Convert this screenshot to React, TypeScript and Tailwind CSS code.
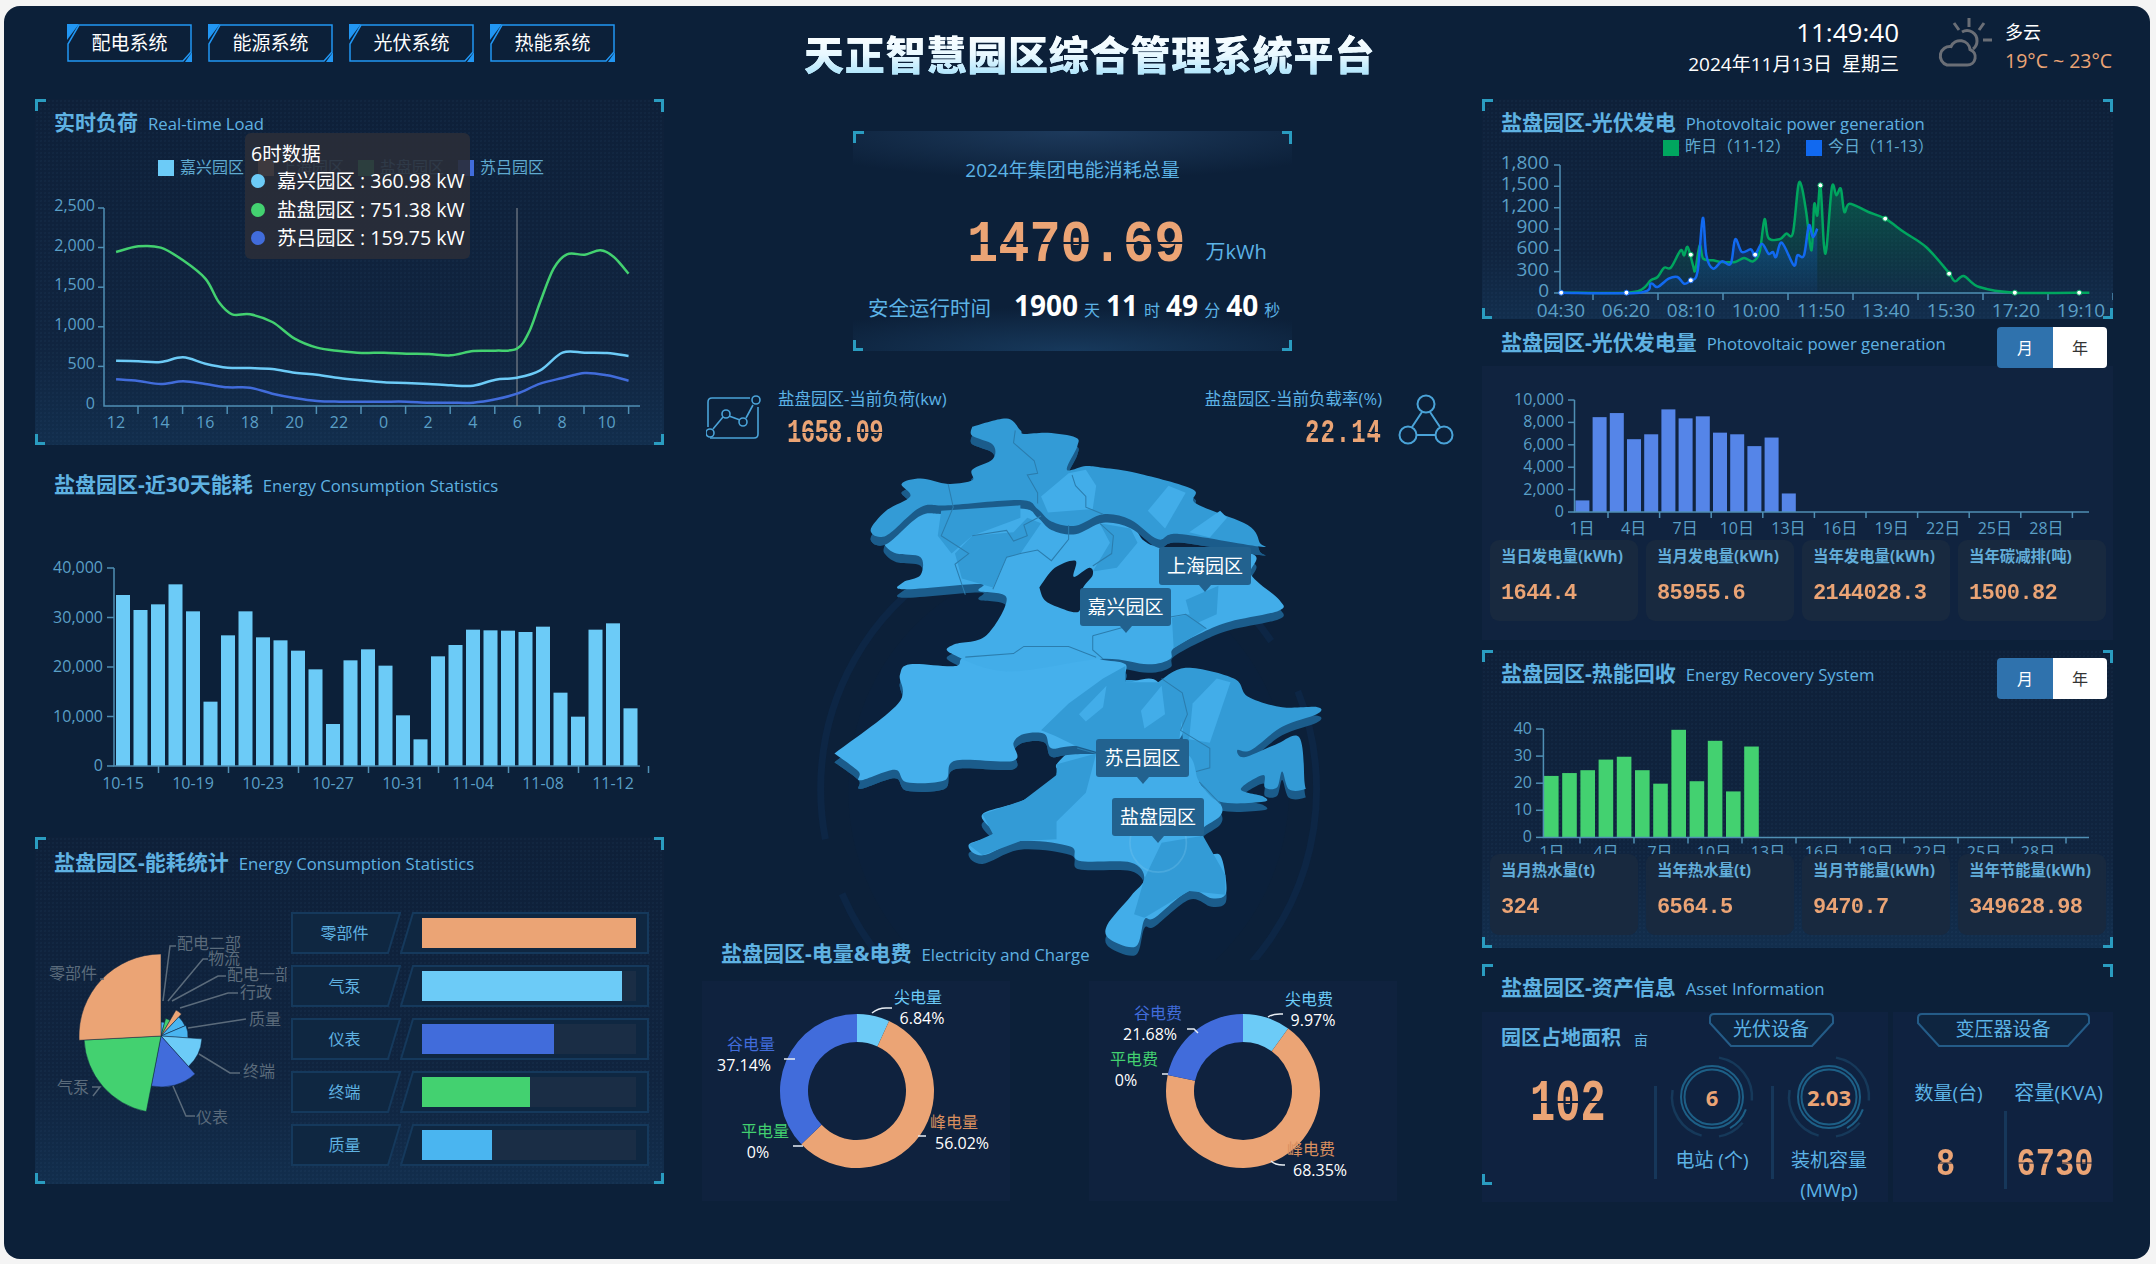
import type { ReactNode } from "react";

type Pt = [number, number];

const ORANGE = "#eba475";
const SKY = "#6ccbf7";
const GREEN = "#43d170";
const BLUE = "#416cdb";
const AZURE = "#4ab5f0";

// catmull-rom, enough to get the echarts "smooth" look
const smooth = (pts: Pt[]) => {
  let d = `M${pts[0][0]} ${pts[0][1]}`;
  for (let i = 0; i < pts.length - 1; i++) {
    const p0 = pts[i - 1] || pts[i];
    const p1 = pts[i];
    const p2 = pts[i + 1];
    const p3 = pts[i + 2] || p2;
    const c1x = p1[0] + (p2[0] - p0[0]) / 6;
    const c1y = p1[1] + (p2[1] - p0[1]) / 6;
    const c2x = p2[0] - (p3[0] - p1[0]) / 6;
    const c2y = p2[1] - (p3[1] - p1[1]) / 6;
    d += `C${c1x} ${c1y} ${c2x} ${c2y} ${p2[0]} ${p2[1]}`;
  }
  return d;
};

const polar = (cx: number, cy: number, r: number, a: number): Pt => {
  const t = (a * Math.PI) / 180;
  return [cx + r * Math.sin(t), cy - r * Math.cos(t)];
};

const slice = (cx: number, cy: number, r0: number, r1: number, a0: number, a1: number) => {
  const large = a1 - a0 > 180 ? 1 : 0;
  const [x0, y0] = polar(cx, cy, r1, a0);
  const [x1, y1] = polar(cx, cy, r1, a1);
  const [x2, y2] = polar(cx, cy, r0, a1);
  const [x3, y3] = polar(cx, cy, r0, a0);
  return `M${x0} ${y0}A${r1} ${r1} 0 ${large} 1 ${x1} ${y1}L${x2} ${y2}A${r0} ${r0} 0 ${large} 0 ${x3} ${y3}Z`;
};

const arc = (cx: number, cy: number, r: number, a0: number, a1: number) => {
  const [x0, y0] = polar(cx, cy, r, a0);
  const [x1, y1] = polar(cx, cy, r, a1);
  return `M${x0} ${y0}A${r} ${r} 0 ${a1 - a0 > 180 ? 1 : 0} 1 ${x1} ${y1}`;
};

const Digi = ({ children, className = "" }: { children: ReactNode; className?: string }) => (
  <span
    className={`inline-block leading-none whitespace-nowrap font-bold [font-family:'Liberation_Mono',monospace] text-transparent bg-clip-text bg-[linear-gradient(180deg,#eba475_44%,transparent_44%,transparent_47%,#eba475_47%)] ${className}`}
  >
    {children}
  </span>
);

const Corners = ({ bottom = true }: { bottom?: boolean }) => (
  <>
    <i className="absolute left-0 top-0 w-[11px] h-[12px] border-l-[3px] border-t-[3px] border-[#2a9cc0]" />
    <i className="absolute right-0 top-0 w-[10px] h-[13px] border-r-[3px] border-t-[3px] border-[#2a9cc0]" />
    {bottom && (
      <>
        <i className="absolute left-0 bottom-0 w-[10px] h-[11px] border-l-[3px] border-b-[3px] border-[#2a9cc0]" />
        <i className="absolute right-0 bottom-0 w-[10px] h-[11px] border-r-[3px] border-b-[3px] border-[#2a9cc0]" />
      </>
    )}
  </>
);

const dotted =
  "bg-[radial-gradient(rgba(120,170,220,0.04)_1px,transparent_1px),linear-gradient(180deg,#0e2039_0%,#10243f_70%,#122e4d_100%)] bg-[size:4px_4px,100%_100%]";

const Title = ({ zh, en }: { zh: string; en: string }) => (
  <div className="-mt-px flex items-baseline gap-[10px] whitespace-nowrap leading-6">
    <span className="text-[21px] font-bold text-[#5fb2e2]">{zh}</span>
    <span className="text-[16.7px] text-[#5fb2e2]">{en}</span>
  </div>
);

const Toggle = () => (
  <div className="flex w-[110px] h-[41px] rounded overflow-hidden text-[16px]">
    <div className="w-[56px] bg-[#2f72ad] text-white flex items-center justify-center">月</div>
    <div className="flex-1 bg-white text-[#333] flex items-center justify-center">年</div>
  </div>
);

const navItems = ["配电系统", "能源系统", "光伏系统", "热能系统"];

const NavButton = ({ label }: { label: string }) => (
  <div className="relative w-[125px] h-[38px] flex items-center justify-center text-[19px] text-white">
    <svg className="absolute inset-0" width="125" height="38">
      <path d="M12 1H124V28L116 37H1V20Z" fill="none" stroke="#2196f3" strokeWidth="1.5" />
      <path d="M0 0H12L0 16Z" fill="#2196f3" />
      <path d="M125 38H118L125 28Z" fill="#2196f3" />
    </svg>
    <span className="relative">{label}</span>
  </div>
);

// ---- left column ----

const z1 = (a: number[][]): Pt[] => a.map(([x, y]) => [x / 2.24, y / 3]);

const loadLight = z1([[260,1076],[310,1078],[360,1080],[410,1066],[460,1085],[510,1097],[560,1098],[610,1101],[660,1112],[710,1118],[760,1128],[810,1135],[860,1141],[910,1143],[960,1146],[1010,1150],[1060,1151],[1110,1133],[1158,1127],[1210,1105],[1260,1052],[1310,1052],[1360,1053],[1408,1062]]);
const loadGreen = z1([[260,750],[310,733],[360,737],[410,775],[460,830],[490,900],[520,937],[560,937],[610,960],[660,1010],[710,1037],[760,1047],[810,1053],[860,1052],[910,1055],[960,1056],[1010,1060],[1060,1047],[1110,1046],[1158,1040],[1185,990],[1210,900],[1240,800],[1270,757],[1310,758],[1345,745],[1375,765],[1408,815]]);
const loadBlue = z1([[260,1132],[310,1137],[360,1146],[410,1138],[460,1146],[510,1156],[560,1157],[610,1175],[660,1188],[710,1197],[760,1199],[810,1199],[860,1199],[910,1199],[960,1202],[1010,1202],[1060,1202],[1110,1192],[1158,1175],[1210,1145],[1260,1128],[1310,1113],[1360,1120],[1408,1136]]);

const axisLabel = "fill-[#5a9fc6] text-[16px]";

const LoadChart = () => (
  <svg width="629" height="310" viewBox="35 134 629 310" className="block">
    {[["嘉兴园区", SKY], ["上海园区", ORANGE], ["盐盘园区", GREEN], ["苏吕园区", BLUE]].map(([name, c], i) => (
      <g key={name}>
        <rect x={158 + i * 100} y="158" width="16" height="16" fill={c} />
        <text x={180 + i * 100} y="171" className="fill-[#5fa9cf] text-[16px]">{name}</text>
      </g>
    ))}
    <path d="M104 206V404H640" fill="none" stroke="#4f8fb4" strokeWidth="1.5" />
    {[206, 245.6, 285.2, 324.8, 364.4].map((y) => (
      <path key={y} d={`M98 ${y}H104`} stroke="#4f8fb4" strokeWidth="1.5" />
    ))}
    {["2,500", "2,000", "1,500", "1,000", "500", "0"].map((t, i) => (
      <text key={t} x="95" y={209 + i * 39.6} textAnchor="end" className={axisLabel}>{t}</text>
    ))}
    {Array.from({ length: 12 }, (_, i) => (
      <path key={i} d={`M${138 + i * 44.6} 404v8`} stroke="#4f8fb4" strokeWidth="1.5" />
    ))}
    {["12", "14", "16", "18", "20", "22", "0", "2", "4", "6", "8", "10"].map((t, i) => (
      <text key={t} x={116 + i * 44.6} y="426" textAnchor="middle" className={axisLabel}>{t}</text>
    ))}
    <path d="M517 206V404" stroke="#8b8f96" strokeWidth="1" />
    <path d={smooth(loadLight)} fill="none" stroke={SKY} strokeWidth="2.5" />
    <path d={smooth(loadGreen)} fill="none" stroke={GREEN} strokeWidth="2.5" />
    <path d={smooth(loadBlue)} fill="none" stroke={BLUE} strokeWidth="2.5" />
  </svg>
);

const tooltipRows = [
  [SKY, "嘉兴园区 : 360.98 kW"],
  [GREEN, "盐盘园区 : 751.38 kW"],
  [BLUE, "苏吕园区 : 159.75 kW"],
];

const LoadTooltip = () => (
  <div className="absolute left-[210px] top-[34px] w-[225px] h-[126px] rounded-md bg-[#2a2e38]/90 pl-[6px] pt-[8px] text-[19.5px] leading-[28.5px] text-white">
    <div className="leading-[26px]">6时数据</div>
    {tooltipRows.map(([c, t]) => (
      <div key={t} className="flex items-center whitespace-nowrap">
        <i className="w-[14px] h-[14px] rounded-full mr-[12px]" style={{ background: c }} />
        {t}
      </div>
    ))}
  </div>
);

const monthBars = [402,447,430,370,451,722,523,451,529,538,569,625,789,598,565,614,763,835,586,552,506,508,509,513,497,695,767,506,487,742];

const MonthChart = () => (
  <svg width="629" height="303" viewBox="35 497 629 303" className="block">
    {monthBars.map((t, i) => (
      <rect key={i} x={116 + i * 17.5} y={460 + t / 3} width="14" height={765 - 460 - t / 3} fill={SKY} />
    ))}
    <path d="M114 567V765H640" fill="none" stroke="#4f8fb4" strokeWidth="1.5" />
    {["40,000", "30,000", "20,000", "10,000", "0"].map((t, i) => (
      <g key={t}>
        <path d={`M107 ${567 + i * 49.5}h7`} stroke="#4f8fb4" strokeWidth="1.5" />
        <text x="103" y={572 + i * 49.5} textAnchor="end" className={axisLabel}>{t}</text>
      </g>
    ))}
    {["10-15", "10-19", "10-23", "10-27", "10-31", "11-04", "11-08", "11-12"].map((t, i) => (
      <g key={t}>
        <path d={`M${158.5 + i * 70} 765v7`} stroke="#4f8fb4" strokeWidth="1.5" />
        <text x={123 + i * 70} y="788" textAnchor="middle" className={axisLabel}>{t}</text>
      </g>
    ))}
  </svg>
);

const pieLabel = "fill-[#5b6b7b] text-[16px]";
const pieSlices: [number, number, number, string][] = [
  [0, 15, 14, "#4ab5f0"],
  [15, 30, 18, GREEN],
  [30, 43, 30, ORANGE],
  [43, 67, 26, "#4ab5f0"],
  [67, 94, 27, AZURE],
  [94, 138, 41, SKY],
  [138, 191, 51, BLUE],
  [191, 267, 77, GREEN],
  [267, 360, 82, ORANGE],
];

const PieChart = () => (
  <svg width="252" height="230" viewBox="35 905 252 230" className="block shrink-0">
    {pieSlices.map(([a0, a1, r, c], i) => (
      <path key={i} d={slice(161, 1035, 0, r, a0, a1)} fill={c} stroke="#0f2540" strokeWidth="0.5" />
    ))}
    <g fill="none" stroke="#5b6b7b" strokeWidth="1.5">
      <path d="M163 1000L170 945H176" />
      <path d="M168 1000L203 958H208" />
      <path d="M172 1000L218 975H226" />
      <path d="M180 1007L228 992H238" />
      <path d="M188 1027L246 1018" />
      <path d="M199 1053L230 1072H240" />
      <path d="M173 1085L186 1115H195" />
      <path d="M93 1095L100 1086H92" />
      <path d="M100 978H104" />
    </g>
    <text x="177" y="948" className={pieLabel}>配电二部</text>
    <text x="208" y="963" className={pieLabel}>物流</text>
    <text x="227" y="979" className={pieLabel}>配电一部</text>
    <text x="240" y="997" className={pieLabel}>行政</text>
    <text x="249" y="1024" className={pieLabel}>质量</text>
    <text x="243" y="1076" className={pieLabel}>终端</text>
    <text x="196" y="1122" className={pieLabel}>仪表</text>
    <text x="57" y="1092" className={pieLabel}>气泵</text>
    <text x="49" y="978" className={pieLabel}>零部件</text>
  </svg>
);

const statRows: [string, number, string][] = [
  ["零部件", 100, ORANGE],
  ["气泵", 93.3, SKY],
  ["仪表", 61.7, BLUE],
  ["终端", 50.4, GREEN],
  ["质量", 32.7, AZURE],
];

const StatRow = ({ name, pct, color }: { name: string; pct: number; color: string }) => (
  <div className="flex h-[42px] w-[358px]">
    <div className="relative w-[110px] flex items-center justify-center text-[16px] text-[#5fb2e2]">
      <svg className="absolute inset-0" width="110" height="42">
        <path d="M1 1H109L97 41H1Z" fill="#0f2741" stroke="#15395c" strokeWidth="2" />
      </svg>
      <span className="relative -ml-[3px]">{name}</span>
    </div>
    <div className="relative w-[249px] -ml-[1px] pl-[22px] pr-[13px] py-[6px]">
      <svg className="absolute inset-0" width="249" height="42">
        <path d="M13 1H248V41H1Z" fill="#0f2741" stroke="#15395c" strokeWidth="2" />
      </svg>
      <div className="relative h-full bg-[#1a2d45]">
        <div className="h-full" style={{ width: `${pct}%`, background: color }} />
      </div>
    </div>
  </div>
);

const LeftColumn = () => (
  <div className="w-[629px] shrink-0">
    <div className="flex gap-[16px] ml-[32px] mt-[18px] h-[38px]">
      {navItems.map((n) => (
        <NavButton key={n} label={n} />
      ))}
    </div>
    <section className={`relative mt-[37px] h-[346px] pt-[12px] pl-[19px] ${dotted}`}>
      <Corners />
      <Title zh="实时负荷" en="Real-time Load" />
      <div className="-ml-[19px]">
        <LoadChart />
      </div>
      <LoadTooltip />
    </section>
    <section className="h-[392px] pt-[28px] pl-[19px]">
      <Title zh="盐盘园区-近30天能耗" en="Energy Consumption Statistics" />
      <div className="-ml-[19px]">
        <MonthChart />
      </div>
    </section>
    <section className={`relative h-[347px] pt-[14px] pl-[19px] ${dotted}`}>
      <Corners />
      <Title zh="盐盘园区-能耗统计" en="Energy Consumption Statistics" />
      <div className="-ml-[19px] mt-[30px] flex">
        <PieChart />
        <div className="ml-[4px] mt-[6px] flex flex-col gap-[11px]">
          {statRows.map(([n, p, c]) => (
            <StatRow key={n} name={n} pct={p} color={c} />
          ))}
        </div>
      </div>
    </section>
  </div>
);

// ---- centre column ----

const parkNorth: Pt[] = [[500,75],[600,52],[640,85],[650,95],[720,92],[800,105],[805,130],[775,195],[830,185],[880,190],[980,205],[1140,250],[1150,290],[1300,350],[1335,400],[1333,410],[1100,375],[1040,390],[960,335],[880,320],[800,352],[730,340],[690,305],[640,280],[430,295],[350,300],[250,380],[205,365],[250,310],[320,270],[295,235],[350,220],[430,235],[500,225],[500,195],[560,165],[560,125],[500,100],[500,75]];
const parkMiddle: Pt[] = [[245,385],[350,310],[430,295],[650,285],[700,325],[760,352],[870,335],[960,350],[1000,395],[1060,412],[1310,430],[1310,490],[1392,560],[1390,590],[1250,620],[1170,650],[1085,695],[1075,725],[1010,740],[870,725],[600,760],[440,710],[445,685],[540,660],[600,555],[520,535],[520,515],[300,530],[300,510],[350,490],[350,440],[280,430],[245,405],[245,385]];
const parkWest: Pt[] = [[100,990],[285,850],[290,770],[320,740],[450,745],[480,720],[620,710],[650,690],[780,690],[870,725],[945,740],[945,790],[1040,790],[1100,950],[800,968],[730,975],[710,935],[650,935],[620,960],[620,1010],[450,1010],[420,1065],[310,1070],[275,1035],[175,1065],[170,1040],[100,990]];
const parkEast: Pt[] = [[1040,790],[1120,750],[1260,780],[1300,830],[1400,860],[1503,860],[1500,880],[1400,915],[1310,980],[1270,980],[1290,1000],[1380,965],[1450,945],[1465,1070],[1465,1090],[1420,1090],[1400,1040],[1385,1085],[1350,1085],[1345,1050],[1280,1090],[1345,1110],[1345,1125],[1220,1125],[1160,1070],[1100,980],[800,968],[880,800],[1040,790]];
const parkSouth: Pt[] = [[800,968],[1160,1000],[1160,1070],[1220,1130],[1220,1165],[1170,1200],[1165,1240],[1190,1270],[1220,1275],[1235,1330],[1235,1385],[1195,1395],[1130,1375],[1030,1450],[1000,1455],[975,1530],[900,1510],[892,1470],[960,1390],[1000,1340],[960,1295],[810,1290],[785,1250],[640,1235],[530,1275],[490,1245],[560,1215],[530,1160],[650,1120],[745,1050],[745,1020],[800,968]];
const parkLake: Pt[] = [[695,525],[740,470],[800,450],[795,495],[840,470],[850,490],[820,530],[810,592],[750,580],[710,560],[695,525]];

const toD = (pts: Pt[]) => `${smooth(pts)}Z`;

const mapPatches = [
  "M500 380L620 370L660 330L700 345L640 430L600 440L560 525L470 500L450 430Z",
  "M870 345L960 360L980 400L920 470L850 480L900 400Z",
  "M410 310L640 295L640 330L500 380L440 430L400 380Z",
  "M700 925L780 850L880 780L945 745L945 790L1040 790L1115 850L1100 960L860 985L800 968L740 940Z",
  "M530 1160L650 1120L745 1050L745 1020L860 990L830 1100L745 1180L745 1230L640 1235L530 1275L490 1245L560 1215Z",
  "M1000 1340L1050 1240L1170 1220L1235 1330L1235 1385L1130 1375L1000 1450L970 1440Z",
  "M1120 560L1215 520L1210 600L1140 630Z",
  "M1080 610L1130 600L1180 640L1085 695Z",
];
const mapLights = [
  "M830 195L780 205L700 270L720 315L850 305L860 240Z",
  "M1010 310L1070 240L1120 260L1060 360Z",
  "M1130 370L1220 310L1240 330L1190 385Z",
  "M1140 850L1210 780L1250 790L1190 960L1130 950Z",
  "M810 880L890 800L880 860L830 900Z",
  "M990 870L1050 800L1060 880L1000 920Z",
];
const mapBorders = [
  "M625 85L620 120L680 170L690 205L660 210L690 260L690 290",
  "M430 235L445 300L410 380L490 430L450 460L480 545",
  "M790 210L800 240L830 270L830 300L880 320",
  "M500 380L600 365L620 395L660 380L650 350L700 325",
  "M780 350L780 390L730 450L690 420L640 430L600 440L560 530",
  "M870 345L910 380L905 430L850 465",
  "M480 720L620 710L650 690L780 690L860 720",
  "M850 660L850 700L880 725",
  "M850 660L1000 620L1120 600L1180 640",
  "M1050 780L1110 820L1125 880L1105 925L1190 975L1190 1030L1150 1040",
  "M805 975L860 990",
  "M1160 1070L1220 1130",
];

const mapPins = [
  ["上海园区", "left-[359px] top-[147px] w-[92px]"],
  ["嘉兴园区", "left-[280px] top-[188px] w-[91px]"],
  ["苏吕园区", "left-[296px] top-[339px] w-[93px]"],
  ["盐盘园区", "left-[312px] top-[398px] w-[92px]"],
];

const ParkMap = () => (
  <div className="relative w-[540px] h-[560px]">
    <svg className="absolute inset-0" width="540" height="560" viewBox="0 0 1568 1568" preserveAspectRatio="none">
      <circle cx="780" cy="1090" r="720" fill="none" stroke="#0d2645" strokeWidth="20" strokeDasharray="900 160" />
      <circle cx="780" cy="1090" r="640" fill="#0c2340" opacity="0.35" />
      {[parkSouth, parkEast, parkWest, parkMiddle, parkNorth].map((p, i) => (
        <path key={i} d={toD(p)} transform="translate(0 24)" fill="#1b5c8b" />
      ))}
      <path d={toD(parkSouth)} fill="#42ade9" />
      <path d={toD(parkEast)} fill="#339bd6" />
      <path d={toD(parkWest)} transform="translate(0 24)" fill="#1b5c8b" />
      <path d={toD(parkWest)} fill="#45b0ec" />
      <path d={toD(parkMiddle)} fill="#42ade9" />
      <path d={toD(parkNorth)} transform="translate(0 24)" fill="#1b5c8b" />
      <path d={toD(parkNorth)} fill="#339bd6" />
      {mapPatches.map((d) => (
        <path key={d} d={d} fill="#339bd6" />
      ))}
      {mapLights.map((d) => (
        <path key={d} d={d} fill="#42ade9" />
      ))}
      <path d={toD(parkLake)} fill="#0c2039" />
      {mapBorders.map((d) => (
        <path key={d} d={d} fill="none" stroke="#2b7dae" strokeWidth="3" />
      ))}
      <circle cx="1040" cy="1240" r="82" fill="none" stroke="#7cc7ef" strokeOpacity="0.3" strokeWidth="5" />
    </svg>
    {mapPins.map(([name, pos]) => (
      <div
        key={name}
        className={`absolute ${pos} h-[38px] rounded-[3px] bg-[#22628f] flex items-center justify-center text-[19px] text-white`}
      >
        {name}
        <i className="absolute left-1/2 -translate-x-1/2 top-full border-x-[6px] border-t-[7px] border-x-transparent border-t-[#22628f]" />
      </div>
    ))}
  </div>
);

type DonutText = { label: string; pct: string; color: string; x: number; y: number; px: number; line: string };

const Donut = ({ cx, parts, texts, originX }: { cx: number; parts: [number, string][]; texts: DonutText[]; originX: number }) => {
  let a = 0;
  return (
    <svg width="308" height="220" viewBox={`${originX} 980 308 220`} className="block">
      {parts.map(([pct, c]) => {
        const a0 = a;
        a += (pct / 100) * 360;
        return pct > 0 ? <path key={c} d={slice(cx, 1090, 49, 77, a0, a)} fill={c} /> : null;
      })}
      {texts.map((t) => (
        <g key={t.label}>
          <path d={t.line} fill="none" stroke="#e8eef4" strokeWidth="1.5" />
          <text x={t.x} y={t.y} textAnchor="middle" className="text-[16px]" fill={t.color}>{t.label}</text>
          <text x={t.px} y={t.y + 21} textAnchor="middle" className="text-[16px] fill-white">{t.pct}</text>
        </g>
      ))}
    </svg>
  );
};

const IconTrend = () => (
  <svg width="56" height="46" viewBox="0 0 56 46" fill="none" stroke="#4aa3d8" strokeWidth="1.6" className="shrink-0">
    <path d="M44 3H6Q2 3 2 7V32M4 43H48Q52 43 52 39V12" />
    <circle cx="50" cy="5" r="4" />
    <circle cx="4" cy="38" r="4" />
    <circle cx="20" cy="19" r="4" />
    <circle cx="37" cy="27" r="4" />
    <path d="M7 34L17 22M23 21L34 25M40 23L47 10" />
  </svg>
);

const IconNodes = () => (
  <svg width="56" height="52" viewBox="0 0 56 52" fill="none" stroke="#4aa3d8" strokeWidth="2" className="shrink-0">
    <circle cx="28" cy="10" r="8.5" />
    <circle cx="10" cy="41" r="8.5" />
    <circle cx="46" cy="41" r="8.5" />
    <path d="M24 18L14 33M32 18L42 33M19 41H37" />
  </svg>
);

const donutA: DonutText[] = [
  { label: "尖电量", pct: "6.84%", color: SKY, x: 918, y: 1002, px: 922, line: "M872 1012Q878 1007 886 1007H892" },
  { label: "谷电量", pct: "37.14%", color: BLUE, x: 751, y: 1049, px: 744, line: "M784 1058H795" },
  { label: "峰电量", pct: "56.02%", color: "#d98f5f", x: 954, y: 1127, px: 962, line: "M918 1135H926" },
  { label: "平电量", pct: "0%", color: GREEN, x: 765, y: 1136, px: 758, line: "M793 1145H803" },
];
const donutB: DonutText[] = [
  { label: "尖电费", pct: "9.97%", color: SKY, x: 1309, y: 1004, px: 1313, line: "M1268 1016Q1272 1013 1280 1013H1283" },
  { label: "谷电费", pct: "21.68%", color: BLUE, x: 1158, y: 1018, px: 1150, line: "M1187 1028H1194L1198 1032" },
  { label: "平电费", pct: "0%", color: GREEN, x: 1134, y: 1064, px: 1126, line: "M1162 1073H1168" },
  { label: "峰电费", pct: "68.35%", color: "#d98f5f", x: 1311, y: 1154, px: 1320, line: "M1271 1160Q1275 1164 1283 1164H1285" },
];

const CenterColumn = () => (
  <div className="w-[770px] shrink-0 ml-[26px] mr-[22px]">
    <div className="ml-[114px] mt-[25px] h-[52px]">
      <h1 className="inline-block text-[40px] leading-[48px] font-black tracking-[0.8px] whitespace-nowrap text-transparent bg-clip-text bg-gradient-to-b from-white via-[#e8f8ff] to-[#9fe0fb] [filter:drop-shadow(0.7px_0_0_#d8f3ff)]">
        天正智慧园区综合管理系统平台
      </h1>
    </div>
    <section className="relative ml-[163px] mt-[48px] w-[439px] h-[220px] bg-[radial-gradient(ellipse_70%_22%_at_50%_0%,#1d3a5c,transparent),radial-gradient(ellipse_70%_20%_at_50%_100%,#17395c,transparent)]">
      <Corners />
      <div className="pt-[26px] text-center text-[19px] leading-[26px] text-[#5cb3e6]">2024年集团电能消耗总量</div>
      <div className="mt-[37px] ml-[114px] flex items-end">
        <Digi className="text-[52px] scale-y-[1.15]">1470.69</Digi>
        <span className="ml-[20px] mb-[6px] text-[20px] leading-[28px] text-[#5cb3e6]">万kWh</span>
      </div>
      <div className="mt-[17px] ml-[15px] flex items-baseline whitespace-nowrap text-[#5cb3e6] text-[16px] leading-[32px]">
        <span className="text-[20.5px] mr-[23px]">安全运行时间</span>
        <b className="text-[28px] text-white">1900</b>
        <span className="mx-[6px]">天</span>
        <b className="text-[28px] text-white">11</b>
        <span className="mx-[6px]">时</span>
        <b className="text-[28px] text-white">49</b>
        <span className="mx-[6px]">分</span>
        <b className="text-[28px] text-white">40</b>
        <span className="mx-[6px]">秒</span>
      </div>
    </section>
    <div className="relative z-10 ml-[16px] mt-[37px] w-[748px] h-[62px] flex justify-between">
      <div className="flex">
        <div className="mt-[7px]">
          <IconTrend />
        </div>
        <div className="ml-[16px]">
          <div className="text-[16.5px] leading-[22px] text-[#5cb3e6]">盐盘园区-当前负荷(kw)</div>
          <Digi className="ml-[9px] mt-[12px] text-[24px] tracking-[-0.7px] scale-y-[1.4]">1658.09</Digi>
        </div>
      </div>
      <div className="flex">
        <div className="text-right">
          <div className="text-[16.5px] leading-[22px] text-[#5cb3e6]">盐盘园区-当前负载率(%)</div>
          <Digi className="mt-[12px] text-[24px] tracking-[1px] scale-y-[1.4]">22.14</Digi>
        </div>
        <div className="ml-[16px] mt-[6px]">
          <IconNodes />
        </div>
      </div>
    </div>
    <div className="-mt-[50px] ml-[110px]">
      <ParkMap />
    </div>
    <div className="relative -mt-[19px] ml-[31px]">
      <Title zh="盐盘园区-电量&电费" en="Electricity and Charge" />
    </div>
    <div className="mt-[14px] ml-[12px] flex gap-[79px]">
      <div className="w-[308px] h-[220px] bg-[#0f223e]">
        <Donut cx={857} originX={702} parts={[[6.84, SKY], [56.02, ORANGE], [37.14, BLUE]]} texts={donutA} />
      </div>
      <div className="w-[308px] h-[220px] bg-[#0f223e]">
        <Donut cx={1243} originX={1089} parts={[[9.97, SKY], [68.35, ORANGE], [21.68, BLUE]]} texts={donutB} />
      </div>
    </div>
  </div>
);

// ---- right column ----

const zp = (a: number[][]): Pt[] => a.map(([x, y]) => [1460 + x / 2.253, y / 3]);

const pvGreen = zp([[228,872],[375,872],[410,862],[430,835],[445,825],[460,797],[475,797],[497,745],[505,760],[513,735],[525,790],[530,805],[540,730],[548,770],[570,775],[590,780],[620,780],[640,768],[660,778],[675,750],[686,652],[695,708],[720,712],[735,695],[750,693],[762,552],[770,555],[780,630],[792,745],[798,607],[805,640],[812,550],[820,730],[826,735],[838,555],[848,580],[858,560],[866,630],[878,605],[920,630],[958,650],[1000,690],[1050,735],[1100,810],[1115,838],[1135,822],[1170,855],[1250,872],[1418,872]]);
const pvBlue = zp([[228,872],[405,872],[430,845],[445,855],[470,830],[490,825],[505,845],[520,835],[535,810],[547,648],[555,760],[570,800],[590,778],[610,785],[620,712],[635,750],[655,742],[665,758],[680,725],[695,755],[705,750],[712,765],[725,722],[752,790],[760,760],[775,760],[786,670],[795,705],[805,680]]);
const pvDots = zp([[520,758],[812,550],[958,650],[1102,815],[1250,872],[1395,872],[228,872],[375,872],[520,835],[665,758]]);

const PvLineChart = () => (
  <svg width="631" height="184" viewBox="1482 134 631 184" className="block">
    <defs>
      <linearGradient id="pvg" x1="0" y1="0" x2="0" y2="1">
        <stop offset="0" stopColor="#00a65f" stopOpacity="0.4" />
        <stop offset="1" stopColor="#00a65f" stopOpacity="0.03" />
      </linearGradient>
      <linearGradient id="pvb" x1="0" y1="0" x2="0" y2="1">
        <stop offset="0" stopColor="#1169f0" stopOpacity="0.35" />
        <stop offset="1" stopColor="#1169f0" stopOpacity="0.05" />
      </linearGradient>
    </defs>
    <rect x="1663" y="138" width="16" height="16" fill="#00a65f" />
    <text x="1685" y="150" className="fill-[#5fa9cf] text-[16px]">昨日（11-12）</text>
    <rect x="1806" y="138" width="16" height="16" fill="#1169f0" />
    <text x="1828" y="150" className="fill-[#5fa9cf] text-[16px]">今日（11-13）</text>
    <path d="M1560 163V291H2089" fill="none" stroke="#4f8fb4" strokeWidth="1.5" />
    {["1,800", "1,500", "1,200", "900", "600", "300", "0"].map((t, i) => (
      <g key={t}>
        <path d={`M1554 ${163 + i * 21.33}h6`} stroke="#4f8fb4" strokeWidth="1.5" />
        <text x="1549" y={167 + i * 21.33} textAnchor="end" className="fill-[#5a9fc6] text-[19px]">{t}</text>
      </g>
    ))}
    {["04:30", "06:20", "08:10", "10:00", "11:50", "13:40", "15:30", "17:20", "19:10"].map((t, i) => (
      <g key={t}>
        <path d={`M${1593 + i * 65} 291v7`} stroke="#4f8fb4" strokeWidth="1.5" />
        <text x={1561 + i * 65} y="315" textAnchor="middle" className="fill-[#5a9fc6] text-[19px]">{t}</text>
      </g>
    ))}
    <path d={`${smooth(pvGreen)}V291H${pvGreen[0][0]}Z`} fill="url(#pvg)" />
    <path d={`${smooth(pvBlue)}V291H${pvBlue[0][0]}Z`} fill="url(#pvb)" />
    <path d={smooth(pvGreen)} fill="none" stroke="#00a65f" strokeWidth="2.5" />
    <path d={smooth(pvBlue)} fill="none" stroke="#1169f0" strokeWidth="2.5" />
    {pvDots.map(([x, y], i) => (
      <circle key={i} cx={x} cy={y} r="2.5" fill="#fff" stroke={i < 6 ? "#00a65f" : "#1169f0"} />
    ))}
  </svg>
);

const monthDays = ["1日", "4日", "7日", "10日", "13日", "16日", "19日", "22日", "25日", "28日"];

const barY = (t: number) => 320 + t / 2.45;

const PvBarChart = () => (
  <svg width="631" height="174" viewBox="1482 366 631 174" className="block">
    {[442,238,228,292,280,219,241,236,276,280,309,288,425].map((t, i) => (
      <rect key={i} x={1575.4 + i * 17.2} y={barY(t)} width="14" height={512 - barY(t)} fill="#5585e8" />
    ))}
    <path d="M1574.5 400V512H2089" fill="none" stroke="#4f8fb4" strokeWidth="1.5" />
    {["10,000", "8,000", "6,000", "4,000", "2,000", "0"].map((t, i) => (
      <g key={t}>
        <path d={`M1568 ${400 + i * 22.4}h6.5`} stroke="#4f8fb4" strokeWidth="1.5" />
        <text x="1564" y={405 + i * 22.4} textAnchor="end" className={axisLabel}>{t}</text>
      </g>
    ))}
    {monthDays.map((t, i) => (
      <g key={t}>
        <path d={`M${1608 + i * 51.6} 512v6`} stroke="#4f8fb4" strokeWidth="1.5" />
        <text x={1582 + i * 51.6} y="534" textAnchor="middle" className={axisLabel}>{t}</text>
      </g>
    ))}
  </svg>
);

const HeatBarChart = () => (
  <svg width="631" height="156" viewBox="1482 698 631 156" className="block">
    {[1117,1110,1103,1077,1070,1103,1136,1004,1130,1031,1155,1045].map((t, i) => (
      <rect key={i} x={1544 + i * 18.2} y={barY(t)} width="14.6" height={837.5 - barY(t)} fill={GREEN} />
    ))}
    <path d="M1543.4 729V837.5H2089" fill="none" stroke="#4f8fb4" strokeWidth="1.5" />
    {["40", "30", "20", "10", "0"].map((t, i) => (
      <g key={t}>
        <path d={`M1536 ${729 + i * 27.1}h7.4`} stroke="#4f8fb4" strokeWidth="1.5" />
        <text x="1532" y={734 + i * 27.1} textAnchor="end" className={axisLabel}>{t}</text>
      </g>
    ))}
    {monthDays.map((t, i) => (
      <g key={t}>
        <path d={`M${1580 + i * 54} 837.5v6`} stroke="#4f8fb4" strokeWidth="1.5" />
        <text x={1552 + i * 54} y="858" textAnchor="middle" className={axisLabel}>{t}</text>
      </g>
    ))}
  </svg>
);

const StatCard = ({ title, value }: { title: string; value: string }) => (
  <div className="w-[148px] h-[81px] rounded-[9px] bg-[#18293f] pl-[11px] pt-[6px]">
    <div className="text-[15.4px] leading-[22px] font-bold text-[#62add9] whitespace-nowrap">{title}</div>
    <Digi className="mt-[15px] text-[22px] tracking-[-0.6px]">{value}</Digi>
  </div>
);

const Badge = ({ label, w }: { label: string; w: number }) => (
  <div className="relative h-[34px] mx-auto flex items-center justify-center text-[19px] text-[#5cb3e6]" style={{ width: w }}>
    <svg className="absolute inset-0" width={w} height="34">
      <path
        d={`M5 1H${w - 5}Q${w - 1} 1 ${w - 1} 5V10L${w - 22} 33H22L1 10V5Q1 1 5 1Z`}
        fill="#0e2540"
        stroke="#245c88"
        strokeWidth="2"
      />
    </svg>
    <span className="relative -mt-[2px]">{label}</span>
  </div>
);

const Gauge = ({ value }: { value: string }) => (
  <div className="relative w-[90px] h-[90px] mx-auto flex items-center justify-center text-[22px] font-bold text-[#eba475]">
    <svg className="absolute inset-0" width="90" height="90" viewBox="0 0 90 90" fill="none">
      <circle cx="45" cy="45" r="31" stroke="#1d5f86" strokeWidth="2" />
      <circle cx="45" cy="45" r="27.5" stroke="#1d5f86" strokeWidth="2" />
      <path d={arc(45, 45, 40, 10, 95)} stroke="#16395a" strokeWidth="2.5" />
      <path d={arc(45, 45, 40, 130, 170)} stroke="#16395a" strokeWidth="2.5" />
      <path d={arc(45, 45, 40, 195, 280)} stroke="#16395a" strokeWidth="2.5" />
      <path d={arc(45, 45, 36, 110, 150)} stroke="#1d5f86" strokeWidth="2" />
    </svg>
    <span className="relative">{value}</span>
  </div>
);

const RightColumn = () => (
  <div className="w-[631px] shrink-0">
    <div className="flex h-[93px] text-white">
      <div className="w-[417px] text-right pt-[9px]">
        <div className="text-[26px] leading-[34px]">11:49:40</div>
        <div className="mt-[2px] text-[19px] leading-[26px]">2024年11月13日&nbsp;&nbsp;星期三</div>
      </div>
      <svg width="56" height="50" viewBox="0 0 56 50" fill="none" stroke="#6a6e76" strokeWidth="3" className="ml-[38px] mt-[12px]">
        <path d="M10 47H30a8 8 0 0 0 3-15.5 10 10 0 0 0-19-3 9.5 9.5 0 0 0-4 18.5Z" />
        <path d="M25 14a10 10 0 0 1 15 9 10 10 0 0 1-4 8" />
        <path d="M32 0V9M17 5L22 12M47 5L42 12M46 22H55" />
      </svg>
      <div className="ml-[12px] pt-[13px]">
        <div className="text-[18px] leading-[26px]">多云</div>
        <div className="mt-[3px] text-[19.5px] leading-[26px] text-[#eba475] whitespace-nowrap">19°C ~ 23°C</div>
      </div>
    </div>
    <section className={`relative h-[220px] pt-[12px] pl-[19px] ${dotted}`}>
      <Corners />
      <Title zh="盐盘园区-光伏发电" en="Photovoltaic power generation" />
      <div className="-ml-[19px]">
        <PvLineChart />
      </div>
    </section>
    <section className="h-[331px] pt-[7px]">
      <div className="flex justify-between pl-[19px] pr-[6px] h-[40px] pt-[5px] relative">
        <Title zh="盐盘园区-光伏发电量" en="Photovoltaic power generation" />
        <div className="-mt-[4px]">
          <Toggle />
        </div>
      </div>
      <div className="h-[274px] bg-[#10233f]">
        <PvBarChart />
        <div className="relative flex gap-2 pl-2">
          {[["当日发电量(kWh)", "1644.4"], ["当月发电量(kWh)", "85955.6"], ["当年发电量(kWh)", "2144028.3"], ["当年碳减排(吨)", "1500.82"]].map(([t, v]) => (
            <StatCard key={t} title={t} value={v} />
          ))}
        </div>
      </div>
    </section>
    <section className={`relative h-[298px] pt-[7px] ${dotted}`}>
      <Corners />
      <div className="flex justify-between pl-[19px] pr-[6px] h-[41px] pt-[5px]">
        <Title zh="盐盘园区-热能回收" en="Energy Recovery System" />
        <div className="-mt-[4px]">
          <Toggle />
        </div>
      </div>
      <HeatBarChart />
      <div className="relative flex gap-2 pl-2">
        {[["当月热水量(t)", "324"], ["当年热水量(t)", "6564.5"], ["当月节能量(kWh)", "9470.7"], ["当年节能量(kWh)", "349628.98"]].map(([t, v]) => (
          <StatCard key={t} title={t} value={v} />
        ))}
      </div>
    </section>
    <section className="relative mt-[16px] h-[236px] pt-[12px]">
      <i className="absolute left-0 top-0 w-[11px] h-[12px] border-l-[3px] border-t-[3px] border-[#2a9cc0]" />
      <i className="absolute right-0 top-0 w-[10px] h-[13px] border-r-[3px] border-t-[3px] border-[#2a9cc0]" />
      <i className="absolute left-0 top-[210px] w-[10px] h-[11px] border-l-[3px] border-b-[3px] border-[#2a9cc0]" />
      <div className="pl-[19px]">
        <Title zh="盐盘园区-资产信息" en="Asset Information" />
      </div>
      <div className="mt-[11px] flex gap-[5px]">
        <div className="w-[406px] h-[190px] bg-[#0f2240] flex">
          <div className="w-[172px] pl-[19px] pt-[12px]">
            <div className="flex items-baseline whitespace-nowrap leading-7 text-[#5fb2e2]">
              <span className="text-[20px] font-bold">园区占地面积</span>
              <span className="ml-[13px] text-[14px]">亩</span>
            </div>
            <Digi className="mt-[30px] ml-[29px] text-[42px] scale-y-[1.4]">102</Digi>
          </div>
          <div className="flex-1 pt-[1px]">
            <Badge label="光伏设备" w={125} />
            <div className="flex text-[19px] leading-[30px] text-[#5cb3e6] text-center">
              <i className="w-[3px] h-[93px] mt-[39px] bg-[#16375a]" />
              <div className="w-[110px] pt-[5px]">
                <Gauge value="6" />
                <div className="mt-[3px]">电站 (个)</div>
              </div>
              <i className="w-[3px] h-[93px] mt-[39px] ml-[4px] bg-[#16375a]" />
              <div className="w-[110px] pt-[5px]">
                <Gauge value="2.03" />
                <div className="mt-[3px]">装机容量</div>
                <div>(MWp)</div>
              </div>
            </div>
          </div>
        </div>
        <div className="w-[220px] h-[190px] bg-[#0f2240] pt-[1px]">
          <Badge label="变压器设备" w={173} />
          <div className="mt-[31px] flex text-center text-[19px] leading-[30px] text-[#5cb3e6]">
            <div className="w-[111px]">
              <div className="whitespace-nowrap">数量(台)</div>
              <div className="pt-[41px] pr-[6px]">
                <Digi className="text-[32px] scale-y-[1.2]">8</Digi>
              </div>
            </div>
            <div className="w-[109px]">
              <div className="text-[20px] whitespace-nowrap">容量(KVA)</div>
              <div className="mt-[3px] h-[78px] border-l-[3px] border-[#16375a] pt-[38px] pr-[10px]">
                <Digi className="text-[32px] scale-y-[1.2]">6730</Digi>
              </div>
            </div>
          </div>
        </div>
      </div>
    </section>
  </div>
);

export default function App() {
  return (
    <div className="w-[2156px] h-[1264px] overflow-hidden bg-[#f4f4f4] pl-[4px] pt-[6px] [font-family:'Open_Sans','Noto_Sans_CJK_SC',sans-serif]">
      <div className="w-[2146px] h-[1253px] rounded-[16px] bg-[#0c2039] pl-[31px] flex overflow-hidden">
        <LeftColumn />
        <CenterColumn />
        <RightColumn />
      </div>
    </div>
  );
}
